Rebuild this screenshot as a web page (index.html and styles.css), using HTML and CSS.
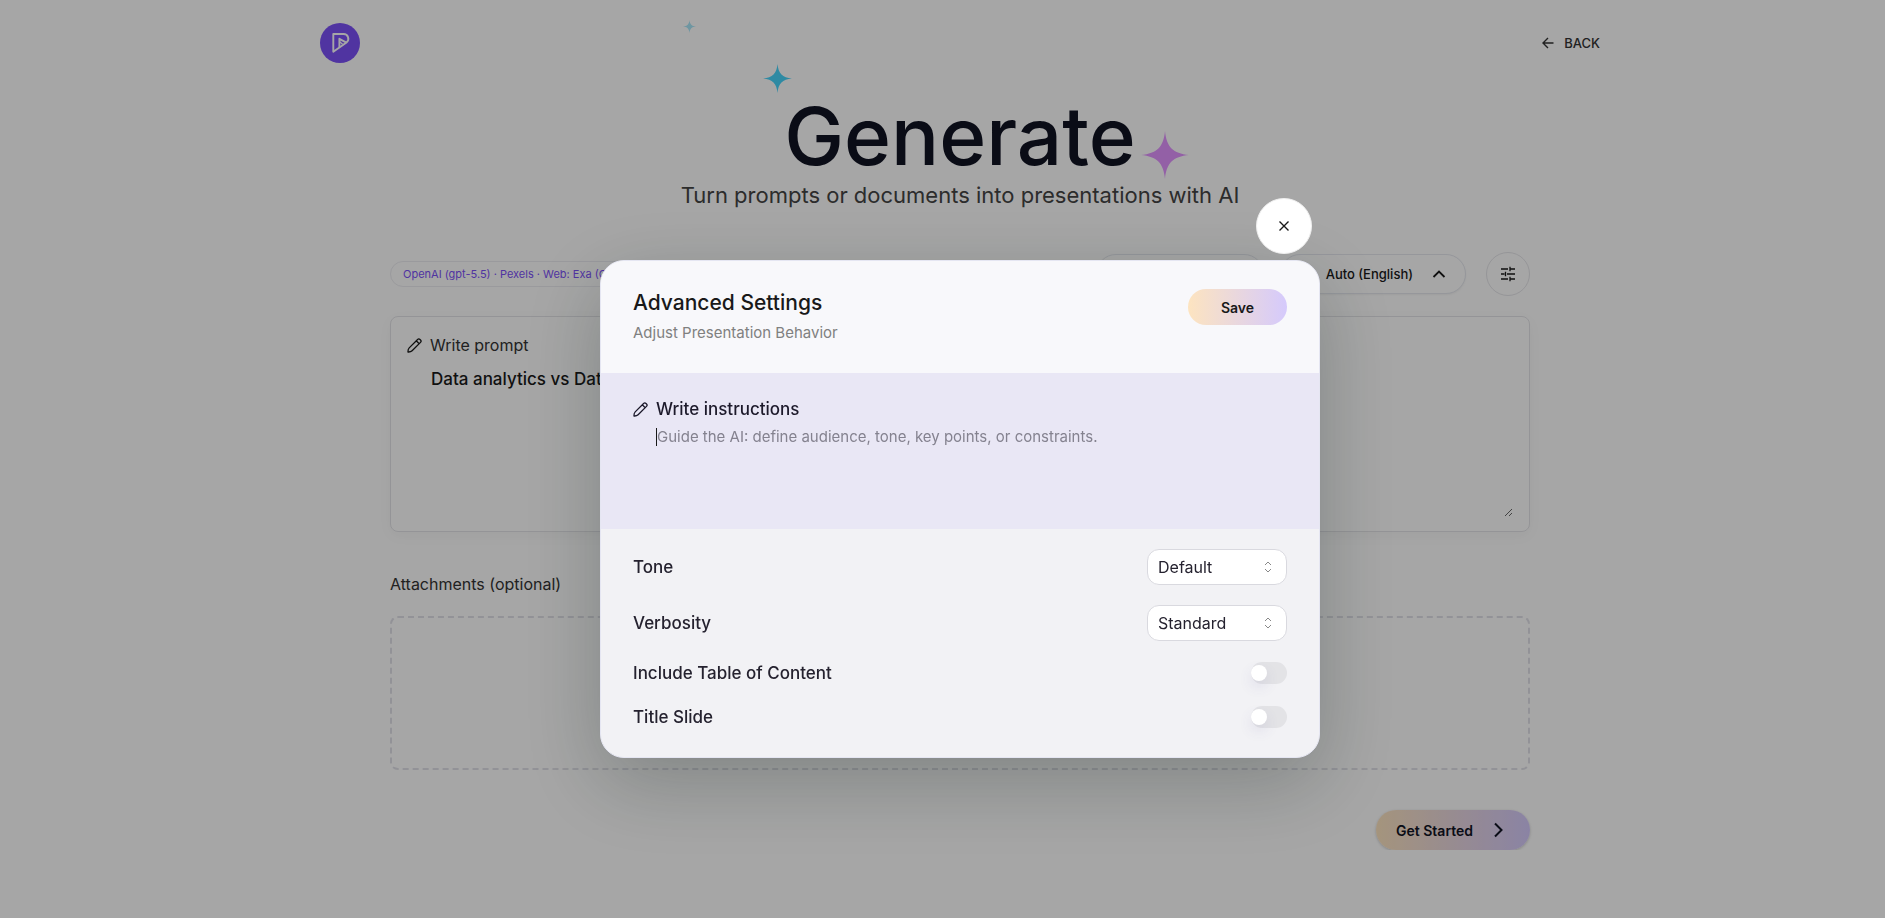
FILE: index.html
```
<!DOCTYPE html>
<html lang="en">

<head>
    <meta charset="UTF-8">
    <meta name="viewport" content="width=device-width, initial-scale=1.0">
    <title>Generate</title>

    <link rel="stylesheet" href="styles.css">
</head>

<body>
    <div class="page">
        <header class="topbar">
            <a href="#" class="logo" aria-label="Home">
                <svg width="40" height="40" viewBox="0 0 40 40" fill="none" stroke="#fff" stroke-width="1.9" stroke-linejoin="round">
                    <circle cx="20" cy="20" r="20" fill="#7c51f8" stroke="none" />
                    <path d="M13.300 11H23.500a4.700 4.700 0 0 1 3 8.400L13.300 28.800Z" />
                    <path d="M19.400 24V15.800l7 3.800" />
                    <path d="M19.400 18.500l3.200 2.800" stroke-width="1.2" />
                </svg>
            </a>
            <a href="#" class="back">
                <svg width="16" height="16" viewBox="0 0 16 16" fill="none" stroke="currentColor" stroke-width="1.4">
                    <path d="M13.500 8H3M8 3L3 8l5 5" />
                </svg>
                BACK
            </a>
        </header>

        <main class="content">
            <section class="hero">
                <h1>Generate</h1>
                <p>Turn prompts or documents into presentations with AI</p>
                <svg class="star star-small" viewBox="0 0 48 48"><path d="M24 0C25.500 16 32 22.500 48 24C32 25.500 25.500 32 24 48C22.500 32 16 25.500 0 24C16 22.500 22.500 16 24 0Z" /></svg>
                <svg class="star star-blue" viewBox="0 0 48 48"><path d="M24 0C25.500 16 32 22.500 48 24C32 25.500 25.500 32 24 48C22.500 32 16 25.500 0 24C16 22.500 22.500 16 24 0Z" /></svg>
                <svg class="star star-purple" viewBox="0 0 48 48"><path d="M24 0C25.500 16 32 22.500 48 24C32 25.500 25.500 32 24 48C22.500 32 16 25.500 0 24C16 22.500 22.500 16 24 0Z" /></svg>
            </section>

            <div class="toolbar">
                <span class="chip">OpenAI (gpt-5.5) · Pexels · Web: Exa (OpenAI)</span>
                <div class="toolbar-actions">
                    <button type="button" class="pill pill-slides">5 slides</button>
                    <button type="button" class="pill pill-lang">
                        Auto (English)
                        <svg width="16" height="16" viewBox="0 0 16 16" fill="none" stroke="currentColor" stroke-width="1.8">
                            <path d="M2.500 11L8 5.500L13.500 11" />
                        </svg>
                    </button>
                    <button type="button" class="round" aria-label="Advanced settings">
                        <svg width="16" height="16" viewBox="0 0 16 16" fill="none" stroke="currentColor" stroke-width="1.3">
                            <path d="M1 3h7M10 3H15M10 .8v4.400M1 8h3.500M7 8h8M5.500 5.800v4.400M1 13h7M10 13H15M10 10.800v4.400" />
                        </svg>
                    </button>
                </div>
            </div>

            <section class="prompt">
                <label for="prompt" class="prompt-label">
                    <svg width="15" height="15" viewBox="0 0 15 15" fill="none" stroke="currentColor" stroke-width="1.3" stroke-linejoin="round">
                        <path d="M1 14C.9 12.200 1.200 10.900 2.200 9.900L10.600 1.500a1.700 1.700 0 0 1 2.400 0l.5.5a1.700 1.700 0 0 1 0 2.400L5.100 12.800C4.100 13.800 2.800 14.100 1 14ZM9.300 2.800l2.900 2.900" />
                    </svg>
                    Write prompt
                </label>
                <textarea id="prompt">Data analytics vs Data science</textarea>
            </section>

            <h2 class="attachments-title">Attachments (optional)</h2>
            <div class="dropzone"></div>

            <div class="actions">
                <button type="button" class="start">
                    Get Started
                    <svg width="16" height="16" viewBox="0 0 16 16" fill="none" stroke="currentColor" stroke-width="2">
                        <path d="M5 1.500L11.500 8L5 14.500" />
                    </svg>
                </button>
            </div>
        </main>
    </div>

    <div class="overlay">
        <div class="modal-wrap">
            <button type="button" class="close" aria-label="Close">
                <svg width="16" height="16" viewBox="0 0 16 16" fill="none" stroke="currentColor" stroke-width="1.4">
                    <path d="M3.500 3.500l9 9M12.500 3.500l-9 9" />
                </svg>
            </button>
            <form class="modal" role="dialog" aria-labelledby="modal-title">
                <div class="modal-head">
                    <div>
                        <h2 id="modal-title">Advanced Settings</h2>
                        <p>Adjust Presentation Behavior</p>
                    </div>
                    <button type="button" class="save">Save</button>
                </div>

                <div class="instructions">
                    <label for="instructions">
                        <svg width="15" height="15" viewBox="0 0 15 15" fill="none" stroke="currentColor" stroke-width="1.3" stroke-linejoin="round">
                            <path d="M1 14C.9 12.200 1.200 10.900 2.200 9.900L10.600 1.500a1.700 1.700 0 0 1 2.400 0l.5.5a1.700 1.700 0 0 1 0 2.400L5.100 12.800C4.100 13.800 2.800 14.100 1 14ZM9.300 2.800l2.900 2.900" />
                        </svg>
                        Write instructions
                    </label>
                    <div class="field">
                        <span class="caret"></span>
                        <textarea id="instructions" placeholder="Guide the AI: define audience, tone, key points, or constraints."></textarea>
                    </div>
                </div>

                <div class="options">
                    <div class="option">
                        <label for="tone">Tone</label>
                        <div class="select">
                            <select id="tone">
                                <option>Default</option>
                            </select>
                            <svg width="8" height="12" viewBox="0 0 8 12" fill="none" stroke="currentColor"><path d="M1 4l3-3 3 3M1 8l3 3 3-3" /></svg>
                        </div>
                    </div>
                    <div class="option">
                        <label for="verbosity">Verbosity</label>
                        <div class="select">
                            <select id="verbosity">
                                <option>Standard</option>
                            </select>
                            <svg width="8" height="12" viewBox="0 0 8 12" fill="none" stroke="currentColor"><path d="M1 4l3-3 3 3M1 8l3 3 3-3" /></svg>
                        </div>
                    </div>
                    <div class="option">
                        <label for="toc">Include Table of Content</label>
                        <input type="checkbox" class="switch" id="toc">
                    </div>
                    <div class="option">
                        <label for="title-slide">Title Slide</label>
                        <input type="checkbox" class="switch" id="title-slide">
                    </div>
                </div>
            </form>
        </div>
    </div>
</body>

</html>
```
FILE: styles.css
```
* {
    box-sizing: border-box;
}

body {
    margin: 0;
    font-family: Inter, "Open Sans", sans-serif;
    font-size: 16px;
    color: #191919;
    background-color: #fff;
}

h1,
h2,
p {
    margin: 0;
}

button,
select,
textarea {
    font-family: inherit;
    color: inherit;
}

button {
    cursor: pointer;
}

svg {
    display: block;
    flex: none;
}

/* page */
.page,
.overlay {
    padding-left: 35px;
}

.topbar {
    display: flex;
    justify-content: space-between;
    align-items: center;
    max-width: 1280px;
    height: 86px;
    margin: 0 auto;
}

.back {
    display: flex;
    align-items: center;
    gap: 8px;
    font-size: 13px;
    font-weight: 500;
    color: #333;
    text-decoration: none;
}

.content {
    max-width: 1140px;
    margin: 0 auto;
}

.hero {
    position: relative;
    height: 166px;
    padding-top: 6px;
    text-align: center;
}

.hero h1 {
    font-size: 80px;
    line-height: 88px;
    font-weight: 500;
    color: #101323;
}

.hero p {
    margin-top: 2px;
    font-size: 22px;
    line-height: 26px;
    color: #444;
}

.star {
    position: absolute;
}

.star-small {
    top: -66px;
    left: 293px;
    width: 13px;
    height: 13px;
    fill: #a9e6f8;
}

.star-blue {
    top: -22px;
    left: 373px;
    width: 29px;
    height: 29px;
    fill: #48d4fb;
}

.star-purple {
    top: 45px;
    left: 751px;
    width: 48px;
    height: 48px;
    fill: #e294ff;
}

.toolbar {
    display: flex;
    justify-content: space-between;
    align-items: center;
    height: 44px;
}

.toolbar-actions {
    display: flex;
    align-items: center;
    gap: 16px;
}

.chip {
    padding: 0 12px;
    border: 1px solid #ededf2;
    border-radius: 13px;
    font-size: 11px;
    line-height: 24px;
    color: #7c51f8;
}

.pill {
    display: flex;
    justify-content: flex-end;
    align-items: center;
    gap: 18px;
    height: 40px;
    padding: 0 18px;
    border: 1px solid #e6e8ef;
    border-radius: 20px;
    background-color: #fff;
    box-shadow: 0 1px 2px rgba(0, 0, 0, 0.05);
    font-size: 13px;
    font-weight: 500;
}

.pill-slides {
    width: 168px;
}

.pill-lang {
    width: 186px;
}

.round {
    display: flex;
    justify-content: center;
    align-items: center;
    width: 44px;
    height: 44px;
    margin-left: 4px;
    padding: 0;
    border: 1px solid #e6e6ea;
    border-radius: 50%;
    background-color: #fff;
}

.prompt {
    display: flex;
    flex-direction: column;
    height: 216px;
    margin-top: 20px;
    padding: 18px 16px 14px;
    border: 1px solid #e4e4e8;
    border-radius: 8px;
    box-shadow: 0 4px 14px rgba(0, 0, 0, 0.04);
}

.prompt-label {
    display: flex;
    align-items: center;
    gap: 8px;
    line-height: 20px;
    font-size: 16px;
    color: #333;
}

.prompt-label svg {
    color: #191919;
}

.prompt textarea {
    flex: 1;
    margin-top: 12px;
    padding: 0 24px;
    border: none;
    outline: none;
    background-color: transparent;
    font-size: 17px;
    font-weight: 500;
    line-height: 24px;
    resize: vertical;
}

.attachments-title {
    margin-top: 40px;
    font-size: 16px;
    line-height: 24px;
    font-weight: 400;
    color: #333;
}

.dropzone {
    height: 154px;
    margin-top: 20px;
    border: 2px dashed #e1e1e8;
    border-radius: 8px;
}

.actions {
    display: flex;
    justify-content: flex-end;
    margin-top: 40px;
}

.start,
.save {
    display: flex;
    align-items: center;
    justify-content: center;
    border: none;
    background: linear-gradient(90deg, #fde4c0, #d5cafc);
    font-weight: 600;
}

.start {
    justify-content: space-between;
    width: 154px;
    height: 40px;
    padding: 0 24px 0 20px;
    border-radius: 20px;
    box-shadow: 0 1px 3px rgba(0, 0, 0, 0.2);
    font-size: 14px;
    color: #101323;
}

/* modal */
.overlay {
    position: fixed;
    inset: 0;
    display: flex;
    justify-content: center;
    align-items: flex-start;
    padding-top: 198px;
    background-color: rgba(0, 0, 0, 0.35);
}

.modal-wrap {
    display: flex;
    flex-direction: column;
    align-items: flex-end;
    gap: 6px;
    width: 720px;
    max-width: 100%;
}

.close {
    display: flex;
    justify-content: center;
    align-items: center;
    z-index: 1;
    width: 56px;
    height: 56px;
    margin-right: 8px;
    border: 1px solid #eee;
    border-radius: 50%;
    background-color: #fff;
}

.modal {
    width: 100%;
    overflow: hidden;
    border: 1px solid #e5e6f2;
    border-radius: 24px;
    background-color: #f2f2f5;
    box-shadow: 0 24px 80px rgba(15, 30, 28, 0.25);
}

.modal-head {
    display: flex;
    justify-content: space-between;
    align-items: flex-start;
    padding: 28px 32px;
    background-color: #f8f8fb;
}

.modal-head h2 {
    font-size: 21px;
    line-height: 28px;
    font-weight: 500;
}

.modal-head p {
    margin-top: 4px;
    font-size: 15px;
    line-height: 24px;
    color: #808080;
}

.save {
    width: 99px;
    height: 36px;
    border-radius: 18px;
    font-size: 14px;
}

.instructions {
    padding: 24px 32px;
    background-color: #e9e7f5;
}

.instructions label {
    display: flex;
    align-items: center;
    gap: 8px;
    font-size: 17px;
    line-height: 24px;
    font-weight: 500;
    color: #1d1a2b;
}

.field {
    position: relative;
    height: 84px;
    padding-left: 24px;
}

.caret {
    position: absolute;
    top: 7px;
    left: 23px;
    width: 1px;
    height: 18px;
    background-color: #191919;
}

.field textarea {
    display: block;
    width: 100%;
    height: 84px;
    padding: 4px 0;
    border: none;
    outline: none;
    background-color: transparent;
    font-size: 15px;
    line-height: 24px;
    resize: none;
}

.field textarea::placeholder {
    color: #84828f;
}

.options {
    display: flex;
    flex-direction: column;
    gap: 20px;
    padding: 20px 32px 28px;
}

.option {
    display: flex;
    justify-content: space-between;
    align-items: center;
    min-height: 24px;
    font-size: 17px;
    font-weight: 500;
    color: #25222f;
}

.select {
    display: flex;
    align-items: center;
    position: relative;
    width: 140px;
}

.select select {
    width: 100%;
    height: 36px;
    padding: 0 10px;
    border: 1px solid #d9d9df;
    border-radius: 12px;
    background-color: #fff;
    font-size: 16px;
    font-weight: 400;
    appearance: none;
}

.select svg {
    position: absolute;
    right: 15px;
    color: #888;
    pointer-events: none;
}

.switch {
    display: flex;
    align-items: center;
    width: 36px;
    height: 22px;
    margin: 0;
    border-radius: 11px;
    background-color: #e3e3e6;
    appearance: none;
}

.switch::before {
    content: "";
    width: 16px;
    height: 16px;
    border-radius: 50%;
    background-color: #fff;
    box-shadow: 0 6px 14px rgba(80, 70, 150, 0.12);
}

.switch:checked {
    justify-content: flex-end;
    background-color: #7c51f8;
}
```
